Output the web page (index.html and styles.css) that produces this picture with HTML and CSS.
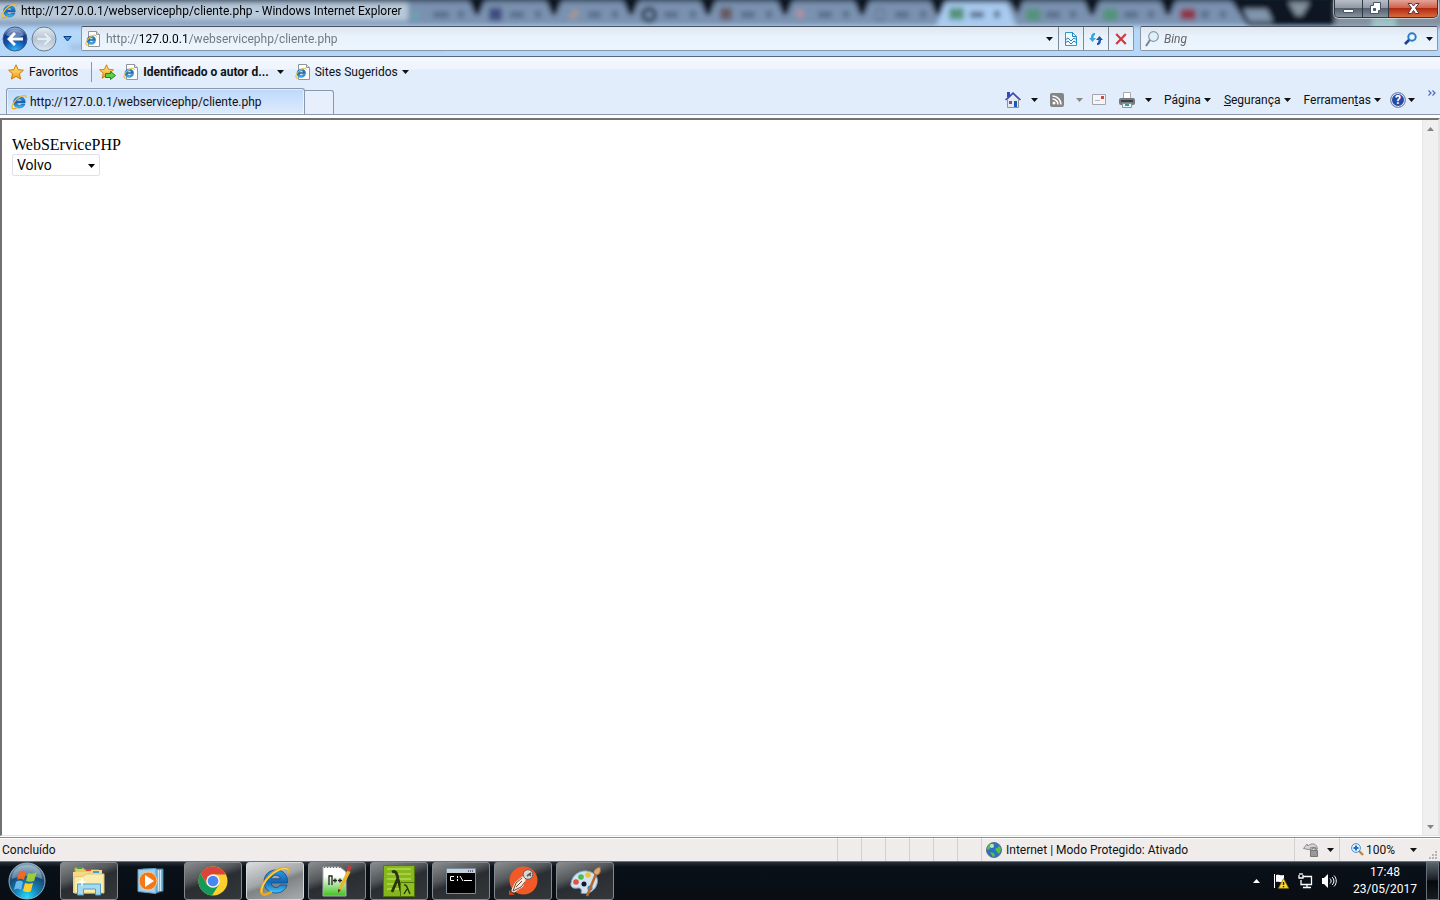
FILE: index.html
```html
<!DOCTYPE html>
<html lang="pt-BR">
<head>
<meta charset="utf-8">
<title>http://127.0.0.1/webservicephp/cliente.php</title>
<link rel="stylesheet" href="styles.css">
</head>
<body>
<svg class="defs" aria-hidden="true">
  <defs>
    <linearGradient id="blue" x1="0" y1="0" x2="0" y2="1"><stop offset="0" stop-color="#2f9ae0"/><stop offset=".5" stop-color="#1467b8"/><stop offset="1" stop-color="#41c4f5"/></linearGradient>
    <linearGradient id="gold" x1="0" y1="0" x2="0" y2="1"><stop offset="0" stop-color="#fff08a"/><stop offset="1" stop-color="#f39a12"/></linearGradient>
    <radialGradient id="orb" cx=".5" cy=".95" r=".9"><stop offset="0" stop-color="#20e0ff"/><stop offset=".35" stop-color="#1787bd"/><stop offset=".7" stop-color="#164a74"/><stop offset="1" stop-color="#7e9db4"/></radialGradient>
    <radialGradient id="back" cx=".5" cy="1" r=".95"><stop offset="0" stop-color="#2fc4ff"/><stop offset=".5" stop-color="#1152b0"/><stop offset=".8" stop-color="#123a8c"/><stop offset="1" stop-color="#8fb0dc"/></radialGradient>
    <linearGradient id="fwd" x1="0" y1="0" x2="0" y2="1"><stop offset="0" stop-color="#e6edf4"/><stop offset=".5" stop-color="#b4c4d4"/><stop offset="1" stop-color="#dce8f2"/></linearGradient>
    <linearGradient id="npp" x1="0" y1="0" x2="0" y2="1"><stop offset=".3" stop-color="#fff"/><stop offset="1" stop-color="#3fc21d"/></linearGradient>
    <filter id="soft" x="-5%" y="-20%" width="110%" height="140%"><feGaussianBlur stdDeviation="2.600"/></filter>
  </defs>
  <symbol id="ie" viewBox="0 0 32 32">
    <path fill="url(#blue)" stroke="#0e4a8c" stroke-width=".8" d="M17 5C9.500 5 5 10.500 5 17s5 11 12 11c5.500 0 9.500-3 11-8h-7c-.8 1.600-2.200 2.400-4 2.400-2.800 0-4.600-1.700-4.800-4.400H28.500C29 10 24.500 5 17 5Zm-4.600 8.800c.5-2.300 2.100-3.600 4.500-3.600s4 1.300 4.400 3.600Z"/>
    <path fill="none" stroke="#e9a91b" stroke-width="2.600" stroke-linecap="round" d="M30 6.500C30 1.500 22 2 14 8 5 15 .5 25 3 28.500c1.500 2 5 1 9-1.300"/>
    <path fill="none" stroke="#ffe36e" stroke-width="1" stroke-linecap="round" d="M29.500 5C27 2 21 3.500 14 8.500 6 14.800 1.800 23 2.700 27"/>
  </symbol>
  <symbol id="iepage" viewBox="0 0 16 16">
    <path fill="#fff" stroke="#8f969e" d="M3.500.5h8l3 3v12h-11z"/><path fill="#dfe4ea" stroke="#8f969e" d="M11.500.5v3h3"/>
    <use href="#ie" x="0" y="3" width="12" height="12"/>
  </symbol>
  <symbol id="star" viewBox="0 0 16 16"><path fill="url(#gold)" stroke="#cf7a0c" stroke-linejoin="round" d="M8 .8l2.200 4.900 5.200.5-3.900 3.600 1.100 5.300L8 12.400l-4.600 2.700 1.100-5.300L.6 6.200l5.200-.5z"/></symbol>
  <symbol id="tri" viewBox="0 0 7 4"><path fill="currentColor" d="M0 0h7L3.500 4z"/></symbol>
</svg>

<div class="window">
  <header class="glass">
    <svg class="backdrop" viewBox="0 0 1440 57" preserveAspectRatio="none" aria-hidden="true">
      <rect width="1440" height="57" fill="#b5d7fa"/>
      <g filter="url(#soft)">
        <rect x="-20" y="-10" width="1480" height="36" fill="#7a92b0"/>
        <rect x="-20" y="-6" width="1480" height="8" fill="#36495d"/>
        <g fill="#0a1624"><path d="M467-4h20l-8 19h-4zM544-4h20l-8 19h-4zM621-4h20l-8 19h-4zM698-4h20l-8 19h-4zM775-4h20l-8 19h-4zM852-4h20l-8 19h-4zM928-4h20l-8 19h-4zM1082-4h20l-8 19h-4zM1158-4h20l-8 19h-4z"/><path d="M1228-4h112v30h-92z"/></g>
        <path d="M935 29l10-26h62l10 26z" fill="#a9cbf0"/>
        <path d="M1005-4h20l-7 19z" fill="#0a1624"/>
        <path d="M1243 9h24l6 13h-24z" fill="#8095ac"/>
        <path d="M1288 2h22l-8 14h-6zM1335 0h110v28h-110z" fill="#83929f"/>
        <rect x="1372" y="18" width="24" height="10" fill="#9bc3c4"/>
        <g fill="#566c8a"><path d="M433 12h16v6h-16zM458 11h6v7h-6zM510 12h14v6h-14zM535 11h6v7h-6zM588 12h13v6h-13zM612 11h6v7h-6zM664 12h14v6h-14zM690 11h6v7h-6zM741 12h14v6h-14zM766 11h6v7h-6zM818 12h14v6h-14zM843 11h6v7h-6zM895 12h14v6h-14zM920 11h6v7h-6zM970 12h14v6h-14zM994 11h6v7h-6zM1046 12h14v6h-14zM1070 11h6v7h-6zM1124 12h14v6h-14zM1148 11h6v7h-6zM1201 11h8v7h-8zM1220 11h6v7h-6z"/></g>
        <path d="M489 8h13v13h-13z" fill="#3f4c80"/><circle cx="649" cy="15" r="6" fill="none" stroke="#26384f" stroke-width="4"/>
        <path d="M569 18l7-9 2 3-5 8z" fill="#b99a80"/><path d="M720 8h12v12h-12z" fill="#665a62"/>
        <path d="M797 10h6v8h-6z" fill="#b88fa0"/><path d="M413 12h5v8h-5z" fill="#64a8b0"/><path d="M876 9h8v11h-8z" fill="none" stroke="#65799a" stroke-width="2"/>
        <path d="M949 8h15v12h-15zM1026 9h15v12h-15zM1103 9h15v12h-15z" fill="#52937b"/>
        <rect x="1180" y="9" width="16" height="11" rx="3" fill="#8e3448"/>
        <path d="M-10 3h418v18h-418z" fill="#c2d2e2" opacity=".85"/>
        <path d="M70 45h372v6h-372z" fill="#8fabc6" opacity=".5"/>
      </g>
    </svg>
    <div class="titlebar">
      <svg class="i16"><use href="#ie"/></svg>
      <h1 class="title">http://127.0.0.1/webservicephp/cliente.php - Windows Internet Explorer</h1>
      <div class="winbtns">
        <button class="wb" aria-label="Minimizar"><svg width="13" height="13" viewBox="0 0 13 13"><path fill="#fff" stroke="#4b5566" d="M1.500 7.500h10v3h-10z"/></svg></button>
        <button class="wb" aria-label="Restaurar"><svg width="13" height="13" viewBox="0 0 13 13"><path fill="#fff" fill-rule="evenodd" stroke="#4b5566" d="M4.500.5h7v8h-2v3h-8v-8h3zM4.500 6.500v2h2v-2z"/></svg></button>
        <button class="wb close" aria-label="Fechar"><svg width="13" height="13" viewBox="0 0 13 13"><path fill="#fff" stroke="#5c3038" d="M1 1.500h3.500l2 2.500 2-2.500H12L8.500 6l3.500 5.500H8.500l-2-3-2 3H1L4.500 6z"/></svg></button>
      </div>
    </div>
    <div class="navrow">
      <button class="plain" aria-label="Voltar"><svg width="26" height="26" viewBox="0 0 26 26"><circle cx="13" cy="13" r="12" fill="url(#back)" stroke="#445a7a"/><path d="M4 9C8 2 18 2 22 9c-5 3-12 3-18 0z" fill="#fff" opacity=".35"/><path fill="#fff" d="M5 13l7-7 2 2-3.500 3.500H21v3H10.500L14 18l-2 2z"/></svg></button>
      <button class="plain" aria-label="Avançar"><svg width="26" height="26" viewBox="0 0 26 26"><circle cx="13" cy="13" r="12" fill="url(#fwd)" stroke="#6a7a8c"/><path fill="#e2eaf2" stroke="#b9c6d4" stroke-width=".6" d="M21 13l-7-7-2 2 3.500 3.500H6v3h9.500L12 18l2 2z"/></svg></button>
      <button class="plain hist" aria-label="Páginas recentes"><svg width="9" height="6" viewBox="0 0 9 6"><path fill="#2f8fe0" stroke="#123f78" d="M.8.500h7.400L4.500 5z"/></svg></button>
      <div class="field address">
        <svg class="i16"><use href="#iepage"/></svg>
        <p class="url">http://<b>127.0.0.1</b>/webservicephp/cliente.php</p>
        <button class="plain dd" aria-label="Mostrar endereços"><svg class="tri"><use href="#tri"/></svg></button>
        <button class="cell" aria-label="Modo de compatibilidade"><svg width="12" height="14" viewBox="0 0 12 14"><path fill="#eefaff" stroke="#2b9ac4" d="M.5.500h7l4 4v9H.5z"/><path fill="none" stroke="#2b7dbd" d="M7.500.5v4h4M0 8l3-2 3 3 3-3 3 2M0 11l3-2 3 3 3-3 3 2"/></svg></button>
        <button class="cell" aria-label="Atualizar"><svg width="14" height="14" viewBox="0 0 14 14"><path fill="#3ba3dd" d="M6 1C3 1 2 3 2 6H0l3.500 4L7 6H4.500C4.500 4 5 3 6 3z"/><path fill="#2455a8" d="M8 13c3 0 4-2 4-5h2l-3.500-4L7 8h2.500C9.500 10 9 11 8 11z"/></svg></button>
        <button class="cell" aria-label="Parar"><svg width="12" height="12" viewBox="0 0 12 12"><path fill="none" stroke="#cf3b3b" stroke-width="2.200" d="M1.200 1l9.600 10M10.800 1L1.200 11"/></svg></button>
      </div>
      <div class="field search">
        <svg width="14" height="16" viewBox="0 0 14 16"><circle cx="8.500" cy="5.500" r="4.800" fill="#dff0fb" stroke="#8b98a6" stroke-width="1.200"/><path stroke="#77828e" stroke-width="2" d="M5 9l-4 6"/></svg>
        <input class="bing" type="text" placeholder="Bing" aria-label="Pesquisar no Bing">
        <button class="plain" aria-label="Pesquisar"><svg width="13" height="13" viewBox="0 0 13 13"><circle cx="8" cy="5" r="3.700" fill="#e9f6ff" stroke="#2a7cc9" stroke-width="2"/><path stroke="#1c3f93" stroke-width="2.600" d="M5 8l-4 4"/></svg></button>
        <button class="plain" aria-label="Opções de pesquisa"><svg class="tri"><use href="#tri"/></svg></button>
      </div>
    </div>
  </header>

  <nav class="bars">
    <div class="favbar">
      <button class="plain fav"><svg class="i16"><use href="#star"/></svg>Favoritos</button>
      <span class="vsep"></span>
      <button class="plain" aria-label="Adicionar à barra"><svg width="17" height="16" viewBox="0 0 17 16"><use href="#star" width="15" height="15"/><path fill="#5fd046" stroke="#258017" d="M6.500 9.500h5v-2l5 4-5 4v-2h-5z"/></svg></button>
      <button class="plain site bold"><svg class="i16"><use href="#iepage"/></svg>Identificado o autor d...<svg class="tri"><use href="#tri"/></svg></button>
      <button class="plain site"><svg class="i16"><use href="#iepage"/></svg>Sites Sugeridos<svg class="tri"><use href="#tri"/></svg></button>
    </div>
    <div class="tabrow">
      <button class="tab"><svg class="i16"><use href="#ie"/></svg>http://127.0.0.1/webservicephp/cliente.php</button>
      <button class="newtab" aria-label="Nova guia"></button>
      <div class="cmds">
        <button class="plain c1" aria-label="Home"><svg width="16" height="16" viewBox="0 0 16 16"><path fill="#3048c8" d="M2 0h3v5H2z"/><path fill="#e6e9f2" stroke="#8890a4" d="M2.500 7.500L8 2l5.500 5.500v8h-11z"/><path fill="none" stroke="#3a4cb4" stroke-width="1.500" d="M.5 8L8 1l7.500 7"/><path fill="#5b6480" d="M4 9h3v3H4z"/><path fill="#1e5bb0" d="M9 9h3v6H9z"/></svg><svg class="tri"><use href="#tri"/></svg></button>
        <button class="plain c2" aria-label="Feeds"><svg width="14" height="14" viewBox="0 0 14 14"><rect width="14" height="14" rx="2" fill="#858585"/><circle cx="4" cy="10" r="1.500" fill="#fff"/><path fill="none" stroke="#fff" stroke-width="1.600" d="M2.500 6A5.500 5.500 0 0 1 8 11.500M2.500 3A8.500 8.500 0 0 1 11 11.500"/></svg><svg class="tri"><use href="#tri"/></svg></button>
        <button class="plain c3" aria-label="Ler email"><svg width="14" height="11" viewBox="0 0 14 11"><path fill="#f6f6f8" stroke="#a5a5ad" d="M.5.500h13v10H.5z"/><path fill="#d8433a" d="M9 2h3v3H9z"/><path stroke="#b4b4bc" d="M3 6.500h5"/></svg></button>
        <button class="plain c4" aria-label="Imprimir"><svg width="16" height="16" viewBox="0 0 16 16"><path fill="#fff" stroke="#a6acb2" d="M4.500.5h7v6h-7z"/><rect y="6" width="16" height="7" rx="2" fill="#72797f"/><path fill="#3b4147" d="M2 8h12v2H2z"/><path fill="#eaf3fa" stroke="#8c959d" d="M3.500 11.500h9v4h-9z"/><path fill="#2f9c8e" d="M6 12h4v2H6z"/></svg><svg class="tri"><use href="#tri"/></svg></button>
        <button class="plain menu"><span>Pá<u>g</u>ina</span><svg class="tri"><use href="#tri"/></svg></button>
        <button class="plain menu"><span><u>S</u>egurança</span><svg class="tri"><use href="#tri"/></svg></button>
        <button class="plain menu"><span>Ferramen<u>t</u>as</span><svg class="tri"><use href="#tri"/></svg></button>
        <button class="plain help" aria-label="Ajuda"><span class="q">?</span><svg class="tri"><use href="#tri"/></svg></button>
        <button class="plain more" aria-label="Mais"><svg width="8" height="6" viewBox="0 0 8 6"><path fill="none" stroke="#5468b4" stroke-width="1.200" d="M.5.500L3 3 .5 5.500M4.500.500L7 3 4.500 5.500"/></svg></button>
      </div>
    </div>
  </nav>

  <main class="page">
    <div class="doc">
      <div>WebSErvicePHP</div>
      <div class="selectbox"><select aria-label="Carro"><option>Volvo</option></select><svg class="tri"><use href="#tri"/></svg></div>
    </div>
    <div class="scroll"><svg class="tri up"><use href="#tri"/></svg><svg class="tri"><use href="#tri"/></svg></div>
  </main>

  <footer class="status">
    <span class="done">Concluído</span>
    <span class="slot"></span><span class="slot"></span><span class="slot"></span><span class="slot"></span><span class="slot"></span><span class="slot"></span>
    <span class="zone"><svg width="16" height="16" viewBox="0 0 16 16"><circle cx="8" cy="8" r="7.500" fill="#2f6fc0" stroke="#5a7187"/><path fill="#56c244" d="M2 4c2-3 5-3 6-2l-1 3-3 1-1 2-2-1zM9 7l5-3 1 4-2 4-2-2zM4 10l4 1 1 3-2 1z"/><circle cx="6" cy="4" r="2" fill="#dff6ff" opacity=".7"/></svg>Internet | Modo Protegido: Ativado</span>
    <span class="prot"><svg width="16" height="15" viewBox="0 0 16 15"><path fill="#d6d6d6" stroke="#8d8d8d" d="M.5 6.500L4 2l1 2c4-4 9-2 9.500 3H11c-1-2-2.500-2.500-4-1l1 2z"/><path fill="#999" stroke="#777" d="M7.500 8.500h7v6h-7z"/><path fill="none" stroke="#888" stroke-width="1.400" d="M9 8V7c0-2 4-2 4 0v1"/></svg><svg class="tri"><use href="#tri"/></svg></span>
    <span class="zoom"><svg width="13" height="13" viewBox="0 0 13 13"><path stroke="#b7874a" stroke-width="2.400" d="M8 8l4 4"/><circle cx="5" cy="5" r="4.400" fill="#e7f4ff" stroke="#4d88c8"/><path stroke="#176fd0" stroke-width="2" d="M5 2.500v5M2.500 5h5"/></svg>100%<svg class="tri"><use href="#tri"/></svg></span>
    <svg class="grip" width="9" height="9" viewBox="0 0 9 9"><path fill="#b9b4b4" d="M6 0h2v2H6zM3 3h2v2H3zM6 3h2v2H6zM0 6h2v2H0zM3 6h2v2H3zM6 6h2v2H6z"/></svg>
  </footer>
</div>

<div class="taskbar">
  <button class="plain start" aria-label="Iniciar"><svg width="38" height="38" viewBox="0 0 38 38"><circle cx="19" cy="19" r="18" fill="url(#orb)" stroke="#8fb0c4"/><path d="M4 17C4 8 11 3 19 3s15 5 15 14c-9-4-21-4-30 0z" fill="#fff" opacity=".3"/><path fill="#ef6a26" d="M11 10c3-2 5-1 7 0l-2 8c-2-1-4-2-7 0z"/><path fill="#9ccb3b" d="M20 11c3 1 5 1 9-1l-3 9c-3 1-5 1-8 0z"/><path fill="#69b9ee" d="M8 20c3-2 5-1 7 0l-2 8c-3-2-5-1-7 0z"/><path fill="#fccd2e" d="M17 21c3 1 5 1 8 0l-2 8c-3 2-5 1-8 0z"/></svg></button>
  <button class="task" aria-label="Windows Explorer"><svg width="34" height="32" viewBox="0 0 34 32"><path fill="#e7c962" stroke="#c5a549" d="M3 3h8l2 2h14v23H3z"/><path fill="#f2db86" d="M1 7h15l2-2h12v23H1z"/><path fill="#f9ecae" stroke="#dfc673" d="M2 12l10-1 2-2h18v19H2z"/><path fill="#1eb14a" d="M5 2h5v2H5z"/><path fill="#e0402e" d="M14 4h5v2h-5z"/><path fill="#3b9ce8" d="M21 6h6v2h-6z"/><path fill="#a5d9f2" stroke="#559fc4" d="M5.500 30V19h23v11h-5v-6h-12v6z"/><path fill="#fff" d="M10 12l1 4 4 1-4 1-1 4-1-4-4-1 4-1z"/></svg></button>
  <button class="task flat" aria-label="Windows Media Player"><svg width="28" height="26" viewBox="0 0 28 26"><path fill="#76b7dc" stroke="#3f7fa8" d="M6 1h20v22l-8 2z"/><path stroke="#cdeaf8" d="M23.500 2v21M21.500 2v21"/><path fill="#a2d0ec" stroke="#5f9dc4" d="M1 1.500l18-1v25L1 23.500z"/><circle cx="11" cy="13" r="9" fill="#f0791c" stroke="#fac38d"/><path fill="#fff" d="M8 7l9 6-9 6z"/></svg></button>
  <button class="task" aria-label="Google Chrome"><svg width="30" height="30" viewBox="0 0 30 30"><circle cx="15" cy="15" r="14.500" fill="#fdd02f"/><path fill="#db4437" d="M2.500 7.500A14.500 14.500 0 0 1 28 8.500H15L9 18z"/><path fill="#169a5a" d="M2.500 7.500A14.500 14.500 0 0 0 14 29.500L21 18.500H9z"/><circle cx="15" cy="15" r="6.800" fill="#f4f4f4"/><circle cx="15" cy="15" r="5.300" fill="#4687f0"/></svg></button>
  <button class="task active" aria-label="Internet Explorer"><svg width="32" height="32"><use href="#ie"/></svg></button>
  <button class="task" aria-label="Notepad++"><svg width="30" height="32" viewBox="0 0 30 32"><path fill="url(#npp)" stroke="#a9aeb2" d="M1 2h17l6 5v24H1z"/><path stroke="#777" stroke-width="2" stroke-dasharray="1 2" d="M2 2h17"/><path fill="none" stroke="#222" stroke-width="1.300" d="M7 20v-9h3v9M11 15.500h4M13 13.500v4M16 15.500h4M18 13.500v4"/><path stroke="#e9b52e" stroke-width="3.500" d="M27 6l-9 18"/><path stroke="#c04038" stroke-width="4" d="M28 1l-2 5"/><path fill="#5a3f20" d="M16 24l3 1-3 3z"/></svg></button>
  <button class="task" aria-label="Editor Lambda"><svg width="32" height="32" viewBox="0 0 32 32"><path fill="#86b81b" stroke="#54790b" d="M.5.500h31v31H.5z"/><path stroke="#a7d144" stroke-width="2" d="M4 4h24M4 9h24M4 14h24M4 19h12M4 24h12"/><path fill="none" stroke="#29330e" stroke-width="2.800" d="M9 7c4-2 5 2 6 7l3 12M14.500 14L9 27"/><path fill="#8fc022" stroke="#4f6f0d" d="M17.500 17.500h14v14h-14z"/><path fill="none" stroke="#29330e" stroke-width="1.400" d="M21 20c3-1 3 3 6 9M24 24l-3 5"/></svg></button>
  <button class="task" aria-label="Prompt de comando"><svg width="30" height="26" viewBox="0 0 30 26"><path fill="#000" stroke="#7c8b98" d="M.5.500h29v25H.5z"/><path fill="#c3d0da" d="M1 1h28v4H1z"/><path stroke="#668" stroke-dasharray="1 1" stroke-width="2" d="M22 3h6"/><path fill="none" stroke="#fff" d="M8 8.500H4.500v4H8M11.500 8v2M11.500 11v2M14 8l3 5M18 12.500h8"/></svg></button>
  <button class="task" aria-label="Postman"><svg width="30" height="30" viewBox="0 0 30 30"><circle cx="15.500" cy="14.500" r="14" fill="#f05a28"/><path fill="#c84418" d="M1 24l6 5H1z"/><path fill="none" stroke="#fbe7d8" stroke-width="5" stroke-linecap="round" d="M15 13l-6 5-3 6M15 14l-2 5-6 4"/><path fill="none" stroke="#6c4a3c" d="M17 16l-4 5-8 4 3-8 6-5M8 21l6-6"/><circle cx="20" cy="8.500" r="4.800" fill="#d8d8d8" stroke="#6d5a52"/><path fill="none" stroke="#5c5451" stroke-width="1.600" d="M19 10l4-3M23 10l-2-2"/></svg></button>
  <button class="task" aria-label="Paint"><svg width="32" height="32" viewBox="0 0 32 32"><path fill="#cfe3f3" stroke="#7f9eb8" d="M2 18C3 10 11 5 18 6c8 1 12 7 10 13-2 7-9 11-16 9 1-3 0-5-3-5-5 1-8-1-7-5z"/><circle cx="7" cy="17" r="2.800" fill="#e05340"/><circle cx="12" cy="12" r="2.800" fill="#4fb84a"/><circle cx="19" cy="10" r="2.800" fill="#f1c232"/><circle cx="15" cy="19" r="2.500" fill="#111a22"/><circle cx="21" cy="23" r="2.600" fill="#3c8ae0"/><path stroke="#b86a2a" stroke-width="2.600" d="M27 9l-9 22"/><path fill="#d9a878" stroke="#9c6c44" d="M25 9c-1-4 2-6 6-7 1 4 0 7-3 8z"/></svg></button>
  <div class="tray">
    <svg class="tri up" aria-hidden="true"><use href="#tri"/></svg>
    <svg width="16" height="16" viewBox="0 0 16 16"><path fill="#fff" d="M1 1h1v14H1zM3 2c3-1 4 1 8 0v7c-4 1-5-1-8 0z"/><path fill="#ffd92b" stroke="#9a7a00" stroke-width=".7" d="M10.500 5.500l5.200 9.800H5.500z"/><path stroke="#222" stroke-width="1.400" d="M10.500 9v3M10.500 13v1.300"/></svg>
    <svg width="16" height="16" viewBox="0 0 16 16"><path fill="none" stroke="#fff" stroke-width="1.300" d="M6 3.500h8.500v8H4V7M2 2v3h4V2M3 0v2M5 0v2M10 12v2M6 14.500h8"/></svg>
    <svg width="16" height="16" viewBox="0 0 16 16"><path fill="#fff" d="M1 5h2l4-4v14l-4-4H1z"/><path fill="none" stroke="#fff" d="M9 5.500c1.500 1.500 1.500 3.500 0 5M11 4c2.500 2.500 2.500 5.500 0 8M13 2.500c3 3 3 8 0 11"/></svg>
    <div class="clock"><span>17:48</span><span>23/05/2017</span></div>
    <button class="desk" aria-label="Mostrar área de trabalho"></button>
  </div>
</div>
</body>
</html>
```
FILE: styles.css
```css
* { box-sizing: border-box; }
html, body { height: 100%; }
body { margin: 0; display: flex; flex-direction: column; overflow: hidden; background: #fff; color: #111; font: 12px/16px Roboto, "Open Sans", sans-serif; }
button, input, select { font: inherit; color: inherit; }
button { margin: 0; padding: 0; }
svg { flex: none; display: block; }
.defs { position: absolute; width: 0; height: 0; }
.i16 { width: 16px; height: 16px; }
.tri { width: 7px; height: 4px; }
.up { transform: rotate(180deg); }
.plain { border: 0; background: none; display: flex; align-items: center; white-space: nowrap; }
.window { flex: 1; display: flex; flex-direction: column; min-height: 0; }

.glass { position: relative; height: 57px; border-bottom: 1px solid #56657a; }
.backdrop { position: absolute; left: 0; top: 0; width: 100%; height: 56px; }
.titlebar { position: relative; height: 26px; display: flex; align-items: flex-start; padding: 3px 2px 0 1px; gap: 4px; }
.title { margin: 0; flex: 1; font-size: 12px; line-height: 16px; font-weight: 400; color: #000; }
.winbtns { display: flex; height: 18px; margin-top: -3px; border: 1px solid #303844; border-top: 0; border-radius: 0 0 5px 5px; overflow: hidden; box-shadow: 0 0 0 1px #ffffff80; }
.wb { width: 28px; display: flex; align-items: center; justify-content: center; border: 0; border-right: 1px solid #303844; background: linear-gradient(#b8bec6, #9099a5 45%, #56606e 50%, #87939f); }
.wb + .wb { width: 26px; }
.wb.close { width: 48px; border: 0; background: linear-gradient(#e3a598, #cf6450 45%, #b32a12 50%, #d86a3c); }
.navrow { position: relative; height: 25px; display: flex; align-items: center; padding: 0 2px; }
.navrow > .plain { margin-right: 3px; }
.navrow > .hist { width: 15px; justify-content: center; margin-right: 6px; }
.field { height: 25px; display: flex; align-items: center; border: 1px solid #8c96a2; border-top-color: #4a5260; border-radius: 2px; background: linear-gradient(#dfe6ee, #e8f2fc 40%, #ebf5fe); }
.address { flex: 1; padding-left: 3px; }
.url { margin: 0; flex: 1; padding-left: 5px; color: #75797e; }
.url b { font-weight: 400; color: #000; }
.dd { width: 17px; justify-content: center; }
.cell { width: 25px; height: 100%; display: flex; align-items: center; justify-content: center; border: 0; border-left: 1px solid #7d8896; background: none; }
.search { width: 298px; margin-left: 6px; padding: 0 4px; gap: 5px; }
.bing { flex: 1; min-width: 0; border: 0; padding: 0; background: none; outline: 0; }
.bing::placeholder { color: #666; opacity: 1; font-style: italic; }
.search .plain + .plain { margin-left: 4px; }

.bars { background: linear-gradient(#f4f8fe, #eef4fd 12px, #e1edfa 13px, #e1edfa); }
.favbar { height: 30px; display: flex; align-items: center; padding-left: 8px; }
.fav { gap: 5px; }
.vsep { width: 1px; height: 20px; margin: 0 7px 0 13px; background: #8c96a2; }
.site { gap: 4px; margin-left: 7px; }
.site + .site { margin-left: 11px; }
.bold { font-weight: 700; }
.bold .tri { margin-left: 4px; }
.tabrow { height: 28px; display: flex; align-items: flex-end; padding-left: 6px; border-bottom: 1px solid #8a98ae; }
.tab { width: 299px; height: 26px; display: flex; align-items: center; gap: 3px; padding-left: 4px; border: 1px solid #8a98ae; border-bottom: 0; border-radius: 3px 3px 0 0; background: linear-gradient(#bcd9fb, #dfebfb); box-shadow: inset 0 0 0 1px #ffffff90; white-space: nowrap; }
.newtab { width: 29px; height: 24px; border: 1px solid #8a98ae; border-left: 0; border-bottom: 0; border-radius: 0 3px 0 0; background: #e6effb; }
.cmds { margin-left: auto; align-self: stretch; display: flex; align-items: center; padding: 0 4px 2px 0; }
.c1 { gap: 10px; margin-right: 12px; }
.c2 { gap: 12px; margin-right: 9px; color: #888; }
.c3 { margin-right: 13px; }
.c4 { gap: 10px; margin-right: 12px; }
.menu { gap: 3px; margin-right: 13px; }
.cmds .menu + .help { margin-left: -4px; }
.help { gap: 2px; margin-right: 13px; }
.q { width: 16px; height: 16px; border: 1px solid #8a94a8; border-radius: 8px; background: #2449a8; box-shadow: inset 0 0 0 1px #e2e8f4; color: #fff; font-weight: 700; line-height: 14px; text-align: center; }
.more { align-self: flex-start; margin-top: 3px; }

.page { flex: 1; min-height: 0; display: flex; margin-top: 3px; border: 2px solid #777; border-width: 2px 2px 1px 2px; border-color: #717171 #e3e3e3 #e3e3e3 #717171; background: #fff; }
.doc { flex: 1; padding: 16px 10px; font: 16px/18px "Liberation Serif", serif; color: #000; }
.selectbox { position: relative; width: 88px; height: 22px; }
.selectbox select { appearance: none; width: 100%; height: 100%; padding: 0 4px; border: 1px solid #e0e0e8; border-radius: 2px; background: #fff; font: 14px/18px Roboto, "Open Sans", sans-serif; }
.selectbox .tri { position: absolute; right: 5px; top: 10px; pointer-events: none; }
.scroll { width: 16px; display: flex; flex-direction: column; justify-content: space-between; align-items: center; padding: 7px 0 6px; background: #f0f0f0; border-left: 1px solid #e6e6e6; color: #858585; }

.status { height: 24px; margin-top: 1px; display: flex; align-items: stretch; line-height: 24px; border-top: 1px solid #8c8c8c; background: #f0eceb; box-shadow: inset 0 1px #fff; }
.done { flex: 1; padding-left: 2px; }
.slot { width: 24px; border-left: 1px solid #d5d0d0; }
.zone { width: 313px; display: flex; align-items: center; gap: 4px; padding-left: 4px; border-left: 1px solid #d5d0d0; }
.prot { width: 45px; display: flex; align-items: center; gap: 8px; padding-left: 8px; border-left: 1px solid #d5d0d0; }
.zoom { width: 80px; display: flex; align-items: center; gap: 2px; padding-left: 11px; border-left: 1px solid #d5d0d0; }
.zoom .tri { margin-left: auto; margin-right: 2px; }
.grip { align-self: flex-end; margin: 0 2px 1px 10px; }

.taskbar { height: 39px; display: flex; align-items: center; border-top: 1px solid #687684; background: linear-gradient(#26303b, #0a1017 5px, #090e15); }
.start { width: 54px; justify-content: center; margin-right: 6px; }
.task { width: 58px; height: 38px; margin-right: 4px; display: flex; align-items: center; justify-content: center; border: 1px solid #85898d; border-radius: 3px; background: linear-gradient(160deg, #8a8d90, #55595c 35%, #2a2e32 50%, #34383b); }
.flat { border-color: transparent; background: none; }
.active { border-color: #d5d8da; background: linear-gradient(160deg, #d9dbdd, #a3a6a9 45%, #7f8386 55%, #a9acae); }
.tray { margin-left: auto; align-self: stretch; display: flex; align-items: center; gap: 8px; color: #fff; }
.tray .up { margin-right: 5px; }
.clock { width: 80px; display: flex; flex-direction: column; align-items: center; line-height: 17px; }
.desk { width: 13px; height: 38px; margin: 0 1px 0 -7px; border: 1px solid #66707a; background: linear-gradient(#59626a, #1c2227 45%, #05090c 50%, #171c20); }
```
